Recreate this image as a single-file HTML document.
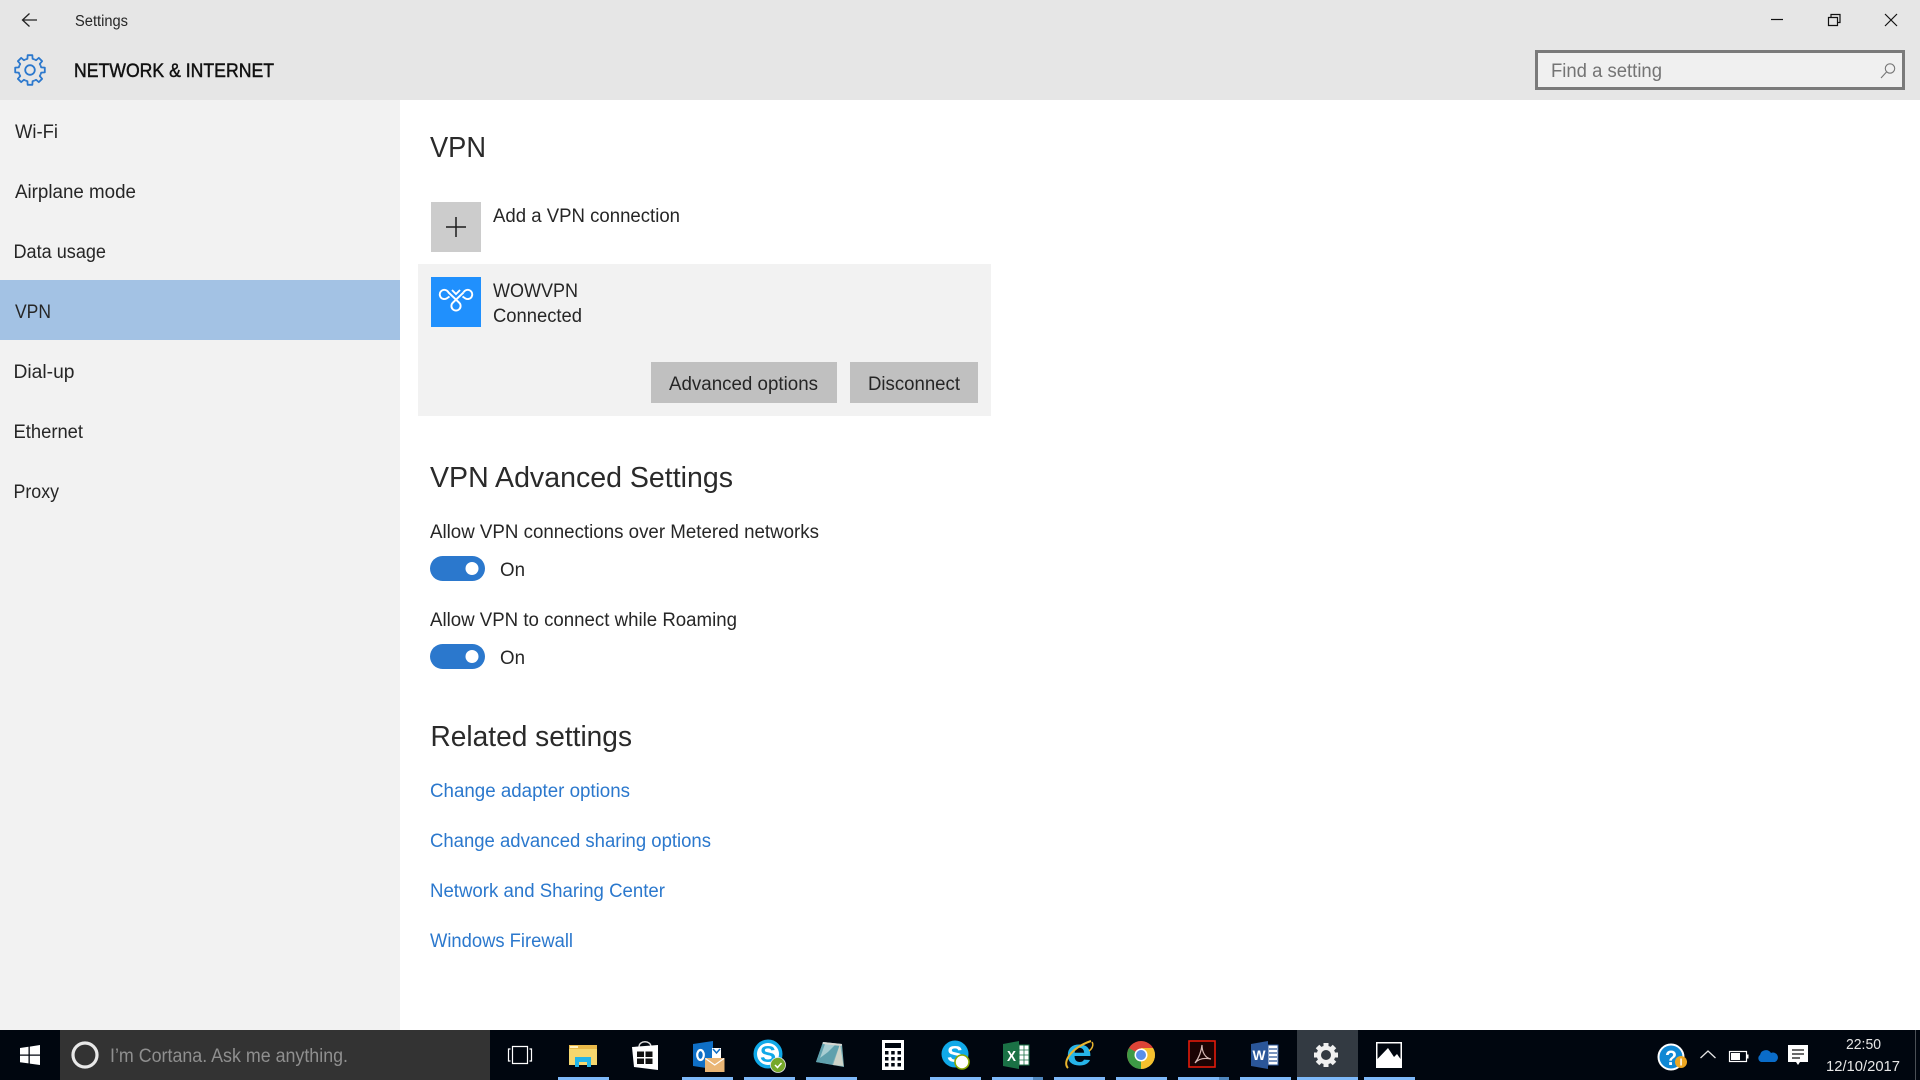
<!DOCTYPE html>
<html><head><meta charset="utf-8"><title>Settings</title>
<style>
html,body{margin:0;padding:0;background:#fff;width:1920px;height:1080px;overflow:hidden}
svg{display:block}
text{font-family:"Liberation Sans",sans-serif;fill:#262626;font-size:19px}
.h{font-size:29px;fill:#2a2a2a}
.l{fill:#2b78cd}
.t{fill:#e6e6e6;font-size:15px}
</style></head><body>
<svg width="1920" height="1080" viewBox="0 0 1920 1080" xmlns="http://www.w3.org/2000/svg">
<defs>
<path id="s" d="M-4.4 -10.62L-2.59 -11.2L-2.35 -14.8L2.35 -14.8L2.59 -11.2L4.4 -10.62" fill="none" stroke="#2b78cd" stroke-width="1.8" stroke-linejoin="round"/>
</defs>
<rect width="1920" height="1080" fill="#fff"/>
<rect width="1920" height="100" fill="#e6e6e6"/>
<rect y="100" width="400" height="930" fill="#f2f2f2"/>
<rect y="280" width="400" height="60" fill="#a3c2e4"/>

<!-- title bar -->
<path d="M37 20H23M29.5 13.5L22.5 20L29.5 26.5" fill="none" stroke="#222" stroke-width="1.3"/>
<text x="75" y="26" textLength="53" lengthAdjust="spacingAndGlyphs" style="font-size:15.5px">Settings</text>
<g transform="translate(30 70)">
<use href="#s"/><use href="#s" transform="rotate(45)"/><use href="#s" transform="rotate(90)"/><use href="#s" transform="rotate(135)"/><use href="#s" transform="rotate(180)"/><use href="#s" transform="rotate(225)"/><use href="#s" transform="rotate(270)"/><use href="#s" transform="rotate(315)"/>
<circle r="4.8" fill="none" stroke="#2b78cd" stroke-width="1.8"/>
</g>
<text x="74" y="77" textLength="200" lengthAdjust="spacingAndGlyphs" style="fill:#111;stroke:#111;stroke-width:.45">NETWORK &amp; INTERNET</text>
<path d="M1771 19.5H1783" stroke="#111" stroke-width="1.2"/>
<path d="M1828.5 17.5H1837.5V25.5H1828.5ZM1831 17V14.5H1840V22.5H1838" fill="none" stroke="#111" stroke-width="1.2"/>
<path d="M1885 14L1897 26M1897 14L1885 26" stroke="#111" stroke-width="1.2"/>
<rect x="1536.5" y="51.5" width="367" height="37" fill="#f0f0f0" stroke="#7a7a7a" stroke-width="3"/>
<text x="1551" y="77" textLength="111" lengthAdjust="spacingAndGlyphs" style="fill:#747474">Find a setting</text>
<circle cx="1890" cy="68.5" r="4.7" fill="none" stroke="#777" stroke-width="1.1"/>
<path d="M1886.5 72L1881 78" stroke="#777" stroke-width="1.1"/>

<!-- sidebar -->
<text x="15" y="138" textLength="43" lengthAdjust="spacingAndGlyphs">Wi-Fi</text>
<text x="15" y="198" textLength="121" lengthAdjust="spacingAndGlyphs">Airplane mode</text>
<text x="13.5" y="258" textLength="92.5" lengthAdjust="spacingAndGlyphs">Data usage</text>
<text x="15" y="318" textLength="36" lengthAdjust="spacingAndGlyphs">VPN</text>
<text x="13.5" y="378" textLength="61" lengthAdjust="spacingAndGlyphs">Dial-up</text>
<text x="13.5" y="438" textLength="69.5" lengthAdjust="spacingAndGlyphs">Ethernet</text>
<text x="13.5" y="498" textLength="45.5" lengthAdjust="spacingAndGlyphs">Proxy</text>

<!-- main -->
<text class="h" x="430" y="157" textLength="56" lengthAdjust="spacingAndGlyphs">VPN</text>
<rect x="431" y="202" width="50" height="50" fill="#ccc"/>
<path d="M446 227H466M456 217V237" stroke="#1c1c1c" stroke-width="1.5"/>
<text x="493" y="222" textLength="187" lengthAdjust="spacingAndGlyphs">Add a VPN connection</text>
<rect x="418" y="264" width="573" height="152" fill="#f2f2f2"/>
<rect x="431" y="277" width="50" height="50" fill="#2090fd"/>
<g transform="translate(431 277)" fill="none" stroke="#fff" stroke-width="1.9">
<path d="M32.5 15.5L22 25.5A4.6 4.6 0 1 0 28 25.5L17.5 15.5A4.6 4.6 0 1 0 15.5 21.5L18.5 19.5"/>
<path d="M32.5 15.5A4.6 4.6 0 1 1 34.5 21.5L31.5 19.5"/>
<path d="M21 13L25 17L29 13"/>
</g>
<text x="493" y="297" textLength="85" lengthAdjust="spacingAndGlyphs">WOWVPN</text>
<text x="493" y="322" textLength="89" lengthAdjust="spacingAndGlyphs">Connected</text>
<rect x="651" y="362" width="186" height="41" fill="#c0c0c0"/>
<text x="669" y="390" textLength="149" lengthAdjust="spacingAndGlyphs">Advanced options</text>
<rect x="850" y="362" width="128" height="41" fill="#c0c0c0"/>
<text x="868" y="390" textLength="92" lengthAdjust="spacingAndGlyphs">Disconnect</text>

<text class="h" x="430" y="487" textLength="303" lengthAdjust="spacingAndGlyphs">VPN Advanced Settings</text>
<text x="430" y="538" textLength="389" lengthAdjust="spacingAndGlyphs">Allow VPN connections over Metered networks</text>
<rect x="430" y="556" width="55" height="25" rx="12.5" fill="#2b78cd"/>
<circle cx="472" cy="568.5" r="6.5" fill="#fff"/>
<text x="500" y="576" textLength="25" lengthAdjust="spacingAndGlyphs">On</text>
<text x="430" y="626" textLength="307" lengthAdjust="spacingAndGlyphs">Allow VPN to connect while Roaming</text>
<rect x="430" y="644" width="55" height="25" rx="12.5" fill="#2b78cd"/>
<circle cx="472" cy="656.5" r="6.5" fill="#fff"/>
<text x="500" y="664" textLength="25" lengthAdjust="spacingAndGlyphs">On</text>

<text class="h" x="430.5" y="746" textLength="201.5" lengthAdjust="spacingAndGlyphs">Related settings</text>
<text class="l" x="430" y="797" textLength="200" lengthAdjust="spacingAndGlyphs">Change adapter options</text>
<text class="l" x="430" y="847" textLength="281" lengthAdjust="spacingAndGlyphs">Change advanced sharing options</text>
<text class="l" x="430" y="897" textLength="235" lengthAdjust="spacingAndGlyphs">Network and Sharing Center</text>
<text class="l" x="430" y="947" textLength="143" lengthAdjust="spacingAndGlyphs">Windows Firewall</text>

<!-- taskbar -->
<rect y="1030" width="1920" height="50" fill="#00060f"/>
<rect x="60" y="1030" width="430" height="50" fill="#333"/>
<path d="M20 1048L28.5 1046.8V1054.5H20ZM29.8 1046.6L40 1045V1054.5H29.8ZM20 1055.7H28.5V1063.4L20 1062.2ZM29.8 1055.7H40V1065L29.8 1063.6Z" fill="#fff"/>
<circle cx="85" cy="1055" r="12" fill="none" stroke="#e8e8e8" stroke-width="3.2"/>
<text x="110" y="1062" textLength="238" lengthAdjust="spacingAndGlyphs" style="fill:#8f8f8f">I’m Cortana. Ask me anything.</text>

<!-- task view -->
<path d="M512.5 1046.5H527.5V1063.5H512.5ZM510.5 1049H508.5V1061H510.5M529.5 1049H531.5V1061H529.5" fill="none" stroke="#fff" stroke-width="1.2"/>

<!-- underlines -->
<g fill="#7db8f8">
<rect x="558" y="1077" width="51" height="3"/><rect x="682" y="1077" width="51" height="3"/><rect x="744" y="1077" width="51" height="3"/><rect x="806" y="1077" width="51" height="3"/><rect x="930" y="1077" width="51" height="3"/><rect x="992" y="1077" width="51" height="3"/><rect x="1054" y="1077" width="51" height="3"/><rect x="1116" y="1077" width="51" height="3"/><rect x="1178" y="1077" width="51" height="3"/><rect x="1240" y="1077" width="51" height="3"/><rect x="1297" y="1077" width="61" height="3"/><rect x="1364" y="1077" width="51" height="3"/>
</g>
<rect x="1033" y="1077" width="10" height="3" fill="#4f86bd"/><rect x="1219" y="1077" width="10" height="3" fill="#4f86bd"/>

<!-- explorer -->
<path d="M569 1045H578L580 1047H597V1065H569Z" fill="#f5d76e"/>
<rect x="569" y="1045" width="28" height="4" fill="#e9b949"/>
<rect x="570" y="1046" width="8" height="2" fill="#fff2c0"/>
<path d="M575 1057H591V1067H587V1062H579V1067H575Z" fill="#22b5e8"/>

<!-- store -->
<path d="M639 1047C639 1040 651 1040 651 1047" fill="none" stroke="#ddd" stroke-width="1.4"/>
<path d="M632 1047L658 1045V1070L634 1067Z" fill="#fff"/>
<path d="M637 1051.5H644V1057H637ZM645.5 1051.5H652.5V1057H645.5ZM637 1058.5H644V1064H637ZM645.5 1058.5H652.5V1064H645.5Z" fill="#111"/>

<!-- outlook -->
<path d="M693 1044L713 1041V1069L693 1066Z" fill="#0f6fc6"/>
<ellipse cx="700.5" cy="1055" rx="3.3" ry="5" fill="none" stroke="#fff" stroke-width="2.2"/>
<rect x="712" y="1048" width="9" height="10" fill="#fff"/>
<path d="M713 1049L716.5 1053L720 1049" fill="none" stroke="#0f6fc6" stroke-width="1.5"/>
<rect x="705" y="1058" width="19.5" height="14" fill="#eab676"/>
<path d="M705.5 1058.5L714.7 1065L724 1058.5" fill="none" stroke="#fff" stroke-width="1.2"/>

<!-- skype 1 -->
<circle cx="768" cy="1054" r="12.5" fill="none" stroke="#10a9e8" stroke-width="4"/>
<circle cx="768" cy="1054" r="11" fill="#fff"/>
<text x="760" y="1062" textLength="16" lengthAdjust="spacingAndGlyphs" style="font-size:23px;font-weight:bold;fill:#10a9e8">S</text>
<circle cx="778" cy="1065" r="7.5" fill="#76a82a" stroke="#e5e5e5" stroke-width=".8"/>
<path d="M775 1065L777.5 1067.5L781.5 1063" fill="none" stroke="#fff" stroke-width="1.5"/>

<!-- notepad -->
<path d="M823 1042L842 1044L844 1067L816 1062Z" fill="#7bb0b8"/>
<path d="M823 1042L816 1062L832 1064.5L840 1044Z" fill="#5fa0ad"/>
<path d="M825 1044L820 1058L828 1052L835 1045Z" fill="#a8cdd2"/>
<path d="M840 1044L843.5 1066L833 1065Z" fill="#cdd3c8"/>
<path d="M823 1042L842 1044L841.5 1046L822.5 1044Z" fill="#d5d5d0"/>

<!-- calc -->
<rect x="882" y="1040" width="22" height="30" fill="#fff"/>
<rect x="885" y="1043" width="16" height="5" fill="#00060f"/>
<g fill="#00060f"><rect x="885" y="1051" width="3.5" height="3.5"/><rect x="891.2" y="1051" width="3.5" height="3.5"/><rect x="897.5" y="1051" width="3.5" height="3.5"/><rect x="885" y="1057" width="3.5" height="3.5"/><rect x="891.2" y="1057" width="3.5" height="3.5"/><rect x="897.5" y="1057" width="3.5" height="3.5"/><rect x="885" y="1063" width="3.5" height="3.5"/><rect x="891.2" y="1063" width="3.5" height="3.5"/><rect x="897.5" y="1063" width="3.5" height="3.5"/></g>

<!-- skype 2 -->
<circle cx="955" cy="1054" r="13.5" fill="#10a9e8"/>
<text x="947" y="1062" textLength="16" lengthAdjust="spacingAndGlyphs" style="font-size:23px;font-weight:bold;fill:#fff">S</text>
<circle cx="962" cy="1062" r="7" fill="#fff" stroke="#8aa800" stroke-width="1.6"/>

<!-- excel -->
<path d="M1003 1044L1019 1041V1069L1003 1066Z" fill="#1a7145"/>
<text x="1007" y="1061" textLength="9" lengthAdjust="spacingAndGlyphs" style="font-size:15px;font-weight:bold;fill:#fff">X</text>
<rect x="1019" y="1045" width="10" height="20" fill="#fff" stroke="#1a7145"/>
<path d="M1024 1045V1065M1019 1050H1029M1019 1055H1029M1019 1060H1029" stroke="#1a7145" stroke-width=".8"/>

<!-- IE -->
<text x="1066" y="1065" textLength="26" lengthAdjust="spacingAndGlyphs" style="font-size:38px;font-weight:bold;fill:#26b4e8">e</text>
<path d="M1068 1068C1062 1062 1071 1048 1091 1041" fill="none" stroke="#e9b52e" stroke-width="2"/>
<path d="M1092 1042C1094 1045 1092 1049 1089 1051" fill="none" stroke="#e9b52e" stroke-width="1.5"/>

<!-- chrome -->
<circle cx="1141" cy="1055" r="14" fill="#dc4437"/>
<path d="M1141 1055L1129 1048A14 14 0 0 0 1134 1067.1Z" fill="#3d9a45"/>
<path d="M1129 1062A14 14 0 0 0 1141 1069A14 14 0 0 0 1155 1055A14 14 0 0 0 1153 1048L1141 1055Z" fill="#3d9a45"/>
<path d="M1141 1069A14 14 0 0 0 1155 1055A14 14 0 0 0 1153 1048H1141V1055Z" fill="#f5c02e"/>
<circle cx="1141" cy="1055" r="6.5" fill="#fff"/><circle cx="1141" cy="1055" r="5" fill="#5a8eea"/>

<!-- acrobat -->
<rect x="1189" y="1041" width="26" height="26" fill="#1b0303" stroke="#e31a0a" stroke-width="1.6"/>
<path d="M1195 1063C1198 1059 1201 1054 1202 1045C1202 1052 1205 1058 1211 1059C1206 1058 1199 1058 1195 1063Z" fill="none" stroke="#d6b9b5" stroke-width="1.2"/>

<!-- word -->
<path d="M1251 1044L1268 1041V1069L1251 1066Z" fill="#2a5699"/>
<text x="1252.5" y="1060" textLength="13" lengthAdjust="spacingAndGlyphs" style="font-size:14px;font-weight:bold;fill:#fff">W</text>
<rect x="1268" y="1045" width="10" height="20" fill="#fff" stroke="#2a5699"/>
<path d="M1269 1049H1277M1269 1053H1277M1269 1057H1277M1269 1061H1277" stroke="#2a5699" stroke-width="1.2"/>

<!-- settings -->
<rect x="1297" y="1030" width="61" height="47" fill="#333a42"/>
<circle cx="1326" cy="1055" r="7.2" fill="none" stroke="#f0f0f0" stroke-width="4.2"/>
<g fill="#f0f0f0"><rect x="1323.5" y="1043" width="5" height="24"/><rect x="1323.5" y="1043" width="5" height="24" transform="rotate(45 1326 1055)"/><rect x="1323.5" y="1043" width="5" height="24" transform="rotate(90 1326 1055)"/><rect x="1323.5" y="1043" width="5" height="24" transform="rotate(135 1326 1055)"/></g>
<circle cx="1326" cy="1055" r="5" fill="#333a42"/>

<!-- photos -->
<rect x="1376" y="1042" width="26" height="26" fill="#fff"/>
<path d="M1377.5 1043.5H1400.5V1059L1397 1054L1394 1057L1388 1048L1377.5 1059Z" fill="#00060f"/>

<!-- tray -->
<circle cx="1671" cy="1057" r="12.5" fill="#1088d4" stroke="#fff" stroke-width="2"/>
<text x="1665" y="1065" textLength="12" lengthAdjust="spacingAndGlyphs" style="font-size:21px;font-weight:bold;fill:#fff">?</text>
<circle cx="1681" cy="1062" r="6" fill="#eda620"/>
<rect x="1680.3" y="1058.5" width="1.5" height="7" fill="#fff"/>
<path d="M1700.5 1058L1708 1051L1715.5 1058" fill="none" stroke="#e6e6e6" stroke-width="1.3"/>
<rect x="1729.5" y="1051.5" width="17" height="10" fill="none" stroke="#fff" stroke-width="1.2"/>
<rect x="1731" y="1053" width="9" height="7" fill="#fff"/>
<rect x="1747" y="1054.5" width="1.5" height="4" fill="#fff"/>
<path d="M1761 1062A4 4 0 0 1 1760 1055A6 6 0 0 1 1771 1053A4.5 4.5 0 0 1 1775 1062Z" fill="#0a6cc8"/>
<path d="M1788 1045H1808V1062H1800L1798 1065L1796 1062H1788Z" fill="#fff"/>
<path d="M1792 1050H1804M1792 1054H1804M1792 1058H1800" stroke="#111" stroke-width="1.2"/>
<text class="t" x="1846" y="1049" textLength="35" lengthAdjust="spacingAndGlyphs">22:50</text>
<text class="t" x="1826" y="1071" textLength="74" lengthAdjust="spacingAndGlyphs">12/10/2017</text>
<rect x="1915" y="1030" width="1" height="50" fill="#4a4f55"/>
</svg>
</body></html>
